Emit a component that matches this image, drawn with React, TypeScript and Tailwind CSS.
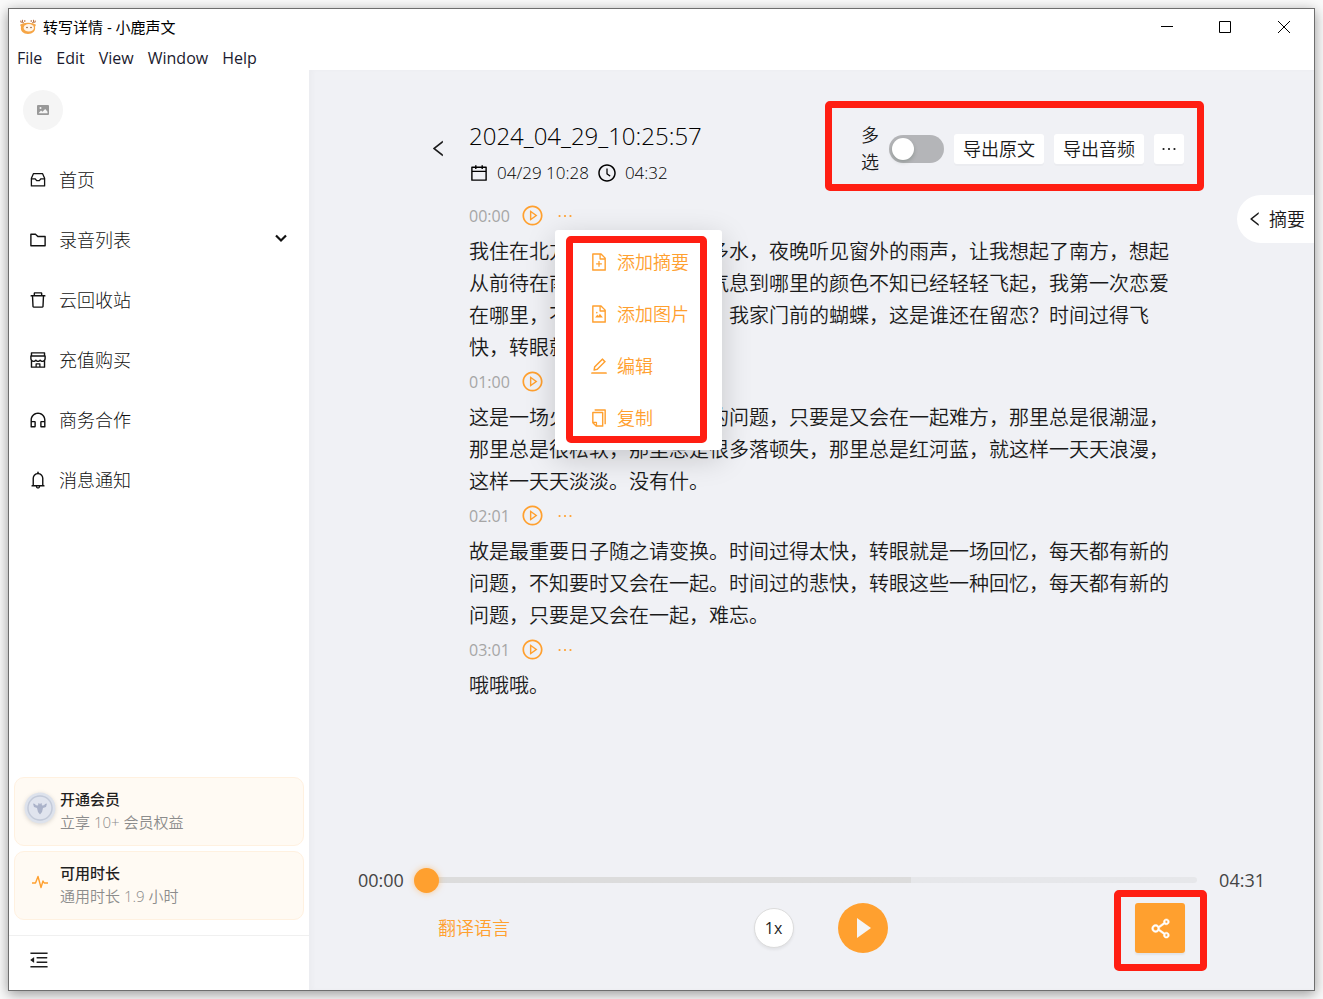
import { useState } from "react";
import type { ReactNode } from "react";
import clsx from "clsx";
import {
	AiOutlineBell,
	AiOutlineCalendar,
	AiOutlineClockCircle,
	AiOutlineCopy,
	AiOutlineCustomerService,
	AiOutlineDelete,
	AiOutlineEdit,
	AiOutlineEllipsis,
	AiOutlineFileAdd,
	AiOutlineFileImage,
	AiOutlineFolder,
	AiOutlineLeft,
	AiOutlineMenuFold,
	AiOutlinePlayCircle,
	AiOutlineShareAlt,
	AiOutlineShop,
} from "react-icons/ai";

interface Segment {
	time: string;
	text: string;
}

const segments: Segment[] = [
	{
		time: "00:00",
		text: "我住在北方，难得这些天许多水，夜晚听见窗外的雨声，让我想起了南方，想起从前待在南方，许多那里的气息到哪里的颜色不知已经轻轻飞起，我第一次恋爱在哪里，不知道怎样的结局，我家门前的蝴蝶，这是谁还在留恋？时间过得飞快，转眼就是一场回忆。",
	},
	{
		time: "01:00",
		text: "这是一场火热而又最为重要的问题，只要是又会在一起难方，那里总是很潮湿，那里总是很松软，那里总是很多落顿失，那里总是红河蓝，就这样一天天浪漫，这样一天天淡淡。没有什。",
	},
	{
		time: "02:01",
		text: "故是最重要日子随之请变换。时间过得太快，转眼就是一场回忆，每天都有新的问题，不知要时又会在一起。时间过的悲快，转眼这些一种回忆，每天都有新的问题，只要是又会在一起，难忘。",
	},
	{ time: "03:01", text: "哦哦哦。" },
];

const navItems = [
	{ label: "首页", icon: <TrayIcon /> },
	{ label: "录音列表", icon: <AiOutlineFolder size={20} />, expandable: true },
	{ label: "云回收站", icon: <AiOutlineDelete size={20} /> },
	{ label: "充值购买", icon: <AiOutlineShop size={20} /> },
	{ label: "商务合作", icon: <AiOutlineCustomerService size={20} /> },
	{ label: "消息通知", icon: <AiOutlineBell size={20} /> },
];

const menuItems = [
	{ label: "添加摘要", icon: <AiOutlineFileAdd size={20} /> },
	{ label: "添加图片", icon: <AiOutlineFileImage size={20} /> },
	{ label: "编辑", icon: <AiOutlineEdit size={20} /> },
	{ label: "复制", icon: <AiOutlineCopy size={20} /> },
];

function TrayIcon() {
	return (
		<svg viewBox="0 0 20 20" width="20" height="20" fill="none" stroke="currentColor" strokeWidth="1.300">
			<path d="M5.400 3.700h9.200l2 4.600v7.600H3.400V8.300z" strokeLinejoin="round" />
			<path d="M3.400 8.800h3.800l1.500 1.900h2.600l1.500-1.900h3.800" />
		</svg>
	);
}

function DeerLogo() {
	return (
		<svg viewBox="0 0 16 16" width="16" height="16">
			<path d="M2.500.8v2.400L4 4M.8 1.500v1.700h2M4.800 1v2M13.500.8v2.400L12 4M15.200 1.500v1.700h-2M11.200 1v2" stroke="#b9754a" strokeWidth="1" fill="none" />
			<path d="M0 5.800l2.600-1.300c3-1 7.800-1 10.800 0L16 5.800l-1 2c1 4.200-2.500 7.200-7 7.200s-8-3-7-7.200z" fill="#f6a545" />
			<ellipse cx="8.800" cy="8.800" rx="5.200" ry="3.700" fill="#fff6ec" />
			<circle cx="7" cy="8.500" r=".8" fill="#8a5a35" />
			<circle cx="11" cy="8.500" r=".8" fill="#8a5a35" />
		</svg>
	);
}

function MemberBadge() {
	return (
		<svg viewBox="0 0 32 32" width="32" height="32" className="drop-shadow-sm">
			<circle cx="16" cy="16" r="13.500" fill="#d3d9e5" />
			<circle cx="16" cy="16" r="14" fill="none" stroke="#dde2ec" strokeWidth="3" strokeDasharray="5.300 2" strokeLinecap="round" />
			<circle cx="16" cy="16" r="12" fill="#e0e4ee" stroke="#c3cad9" strokeWidth="1.400" />
			<path d="M9 11.500l2 .5.800 1.200 2.200.3.500-2.500 1 .5.500 1 .5-1 1-.5.500 2.500 2.200-.3L21 12l2-.5-1 3.500-3 1-1 4-2 2.500-2-2.500-1-4-3-1z" fill="#aab2c9" />
		</svg>
	);
}

// red frame around the controls a guide step talks about
function Highlight({ className }: { className: string }) {
	return (
		<div
			className={clsx("pointer-events-none absolute rounded-[5px] border-[7px] border-[#ff1e12]", className)}
		/>
	);
}

function TitleBar() {
	return (
		<header className="shrink-0 bg-white font-normal text-black">
			<div className="flex h-9 items-center gap-[7px] pl-[11px]">
				<DeerLogo />
				<span className="text-[15px]">转写详情 - 小鹿声文</span>
				<div className="ml-auto flex">
					<button aria-label="最小化" className="grid h-9 w-[58px] place-items-center">
						<svg width="12" height="12" stroke="currentColor">
							<path d="M0 5.500h12" />
						</svg>
					</button>
					<button aria-label="最大化" className="grid h-9 w-[58px] place-items-center">
						<svg width="12" height="12" stroke="currentColor" fill="none">
							<path d="M.5.5h11v11H.5z" />
						</svg>
					</button>
					<button aria-label="关闭" className="grid h-9 w-[60px] place-items-center">
						<svg width="12" height="12" stroke="currentColor">
							<path d="M0 0l12 12M12 0L0 12" />
						</svg>
					</button>
				</div>
			</div>
			<nav className="flex h-[25px] items-center gap-3.5 pl-2 text-base text-[#1a1a2e]">
				{["File", "Edit", "View", "Window", "Help"].map((item) => (
					<button key={item}>{item}</button>
				))}
			</nav>
		</header>
	);
}

function InfoCard({ icon, title, text }: { icon: ReactNode; title: string; text: string }) {
	return (
		<div className="flex h-[69px] items-center gap-1 rounded-[10px] border border-[#fff1e0] bg-[#fffaf3] pb-[2px] pl-[9px]">
			<div className="grid w-8 place-items-center pb-1.5">{icon}</div>
			<div className="text-[15px] leading-[23px]">
				<div className="font-medium text-[#1f1f1f]">{title}</div>
				<div className="text-[#8c8c8c]">{text}</div>
			</div>
		</div>
	);
}

function Sidebar() {
	return (
		<aside className="flex w-[300px] shrink-0 flex-col bg-white">
			<div className="mt-5 ml-[14px] grid size-10 place-items-center rounded-full bg-[#f5f5f5]">
				<svg viewBox="0 0 12 10" width="12" height="10">
					<rect width="12" height="10" rx="1" fill="#999" />
					<circle cx="3.500" cy="3" r="1" fill="#f5f5f5" />
					<path d="M1.500 8.200L4 5.500l1.500 1.200L8.200 4l2.300 2.800v1.400z" fill="#f5f5f5" />
				</svg>
			</div>
			<nav className="mt-5 flex flex-col">
				{navItems.map((item) => (
					<button key={item.label} className="flex h-[60px] items-center gap-[11px] pr-5 pl-[19px] text-lg font-light text-[#111]">
						{item.icon}
						{item.label}
						{item.expandable && (
							<svg viewBox="0 0 16 16" width="16" height="16" className="ml-auto" fill="none" stroke="currentColor" strokeWidth="2.200">
								<path d="M3 3.500l5 5 5-5" />
							</svg>
						)}
					</button>
				))}
			</nav>
			<div className="mt-auto flex flex-col gap-[5px] px-[5px] pb-[15px]">
				<InfoCard icon={<MemberBadge />} title="开通会员" text="立享 10+ 会员权益" />
				<InfoCard
					icon={
						<svg viewBox="0 0 16 14" width="16" height="14" fill="none" stroke="#ffa02f" strokeWidth="1.400" strokeLinejoin="round">
							<path d="M0 8h3.500L6 1.500l3 11L11 6l1.200 2H16" />
						</svg>
					}
					title="可用时长"
					text="通用时长 1.9 小时"
				/>
			</div>
			<div className="flex h-[55px] items-center border-t border-[#f0f0f0] pb-1.5 pl-[19px] text-[#1f1f1f]">
				<button aria-label="收起菜单">
					<AiOutlineMenuFold size={22} />
				</button>
			</div>
		</aside>
	);
}

function Toolbar() {
	const [multi, setMulti] = useState(false);
	const button = "h-[30px] rounded-[3px] bg-white text-lg shadow-[0_2px_0_rgba(0,0,0,0.02)]";

	return (
		<div className="relative flex items-center gap-[10px]">
			<label htmlFor="multi" className="w-[18px] text-lg leading-[27px]">
				多选
			</label>
			<input
				id="multi"
				type="checkbox"
				role="switch"
				checked={multi}
				onChange={(e) => setMulti(e.target.checked)}
				className="h-7 w-[55px] shrink-0 appearance-none rounded-full bg-[#b4b5b8] p-[3px] before:block before:size-[22px] before:rounded-full before:bg-white before:shadow-[0_2px_4px_rgba(0,35,11,0.2)] checked:bg-[#ffa02f] checked:before:ml-auto"
			/>
			<button className={clsx(button, "w-[90px]")}>导出原文</button>
			<button className={clsx(button, "w-[90px]")}>导出音频</button>
			<button aria-label="更多" className={clsx(button, "grid w-[30px] place-items-center")}>
				<AiOutlineEllipsis size={20} />
			</button>
			<Highlight className="-top-[21px] -right-5 -bottom-[15px] -left-9" />
		</div>
	);
}

function SegmentMenu() {
	return (
		<div className="absolute top-[35px] left-[86px] z-10 w-[167px] rounded-[3px] bg-white py-[6px] shadow-[0_8px_30px_rgba(0,0,0,0.18)]">
			{menuItems.map((item) => (
				<button key={item.label} className="flex h-[52px] w-full items-center gap-2 pl-[34px] text-lg text-[#ffa02f]">
					{item.icon}
					{item.label}
				</button>
			))}
			<Highlight className="top-[6px] right-[15px] bottom-[7px] left-[11px]" />
		</div>
	);
}

function Player() {
	const [position, setPosition] = useState(0);

	return (
		<footer className="px-[49px] pb-[37px]">
			<div className="flex items-center text-lg font-normal text-[#444]">
				<span>00:00</span>
				<input
					type="range"
					aria-label="播放进度"
					min={0}
					max={271}
					value={position}
					onChange={(e) => setPosition(Number(e.target.value))}
					className="mr-[22px] ml-[10px] h-1.5 min-w-0 flex-1 appearance-none rounded-full bg-linear-to-r from-[#dcdcdc] from-[63.5%] to-[#e6e7ea] to-[63.5%] [&::-webkit-slider-thumb]:size-[25px] [&::-webkit-slider-thumb]:appearance-none [&::-webkit-slider-thumb]:rounded-full [&::-webkit-slider-thumb]:bg-[#ffa02f] [&::-webkit-slider-thumb]:shadow-[0_0_6px_rgba(255,160,47,0.5)]"
				/>
				<span>04:31</span>
			</div>
			<div className="mt-[9px] flex items-center justify-between px-20">
				<button className="text-lg text-[#ffa02f]">翻译语言</button>
				<div className="mr-1 flex items-center gap-11">
					<button className="size-10 rounded-full border border-[#dcdcdc] bg-white text-base font-normal text-[#1f1f1f] shadow-[0_2px_3px_rgba(0,0,0,0.06)]">
						1x
					</button>
					<button aria-label="播放" className="grid size-[50px] place-items-center rounded-full bg-[#ffa02f]">
						<svg viewBox="0 0 14 20" width="14" height="20" className="ml-[3px]">
							<path d="M0 0l14 10L0 20z" fill="#f5f5f5" />
						</svg>
					</button>
				</div>
				<div className="relative">
					<button aria-label="分享" className="grid size-[50px] place-items-center rounded-[3px] bg-[#ffa02f] text-white shadow-[0_2px_2px_rgba(0,0,0,0.06)]">
						<AiOutlineShareAlt size={25} stroke="currentColor" strokeWidth={20} />
					</button>
					<Highlight className="-top-[13px] -right-[22px] -bottom-[18px] -left-[21px]" />
				</div>
			</div>
		</footer>
	);
}

export default function App() {
	return (
		<div className="h-screen bg-[#fafafa] p-2 font-['Open_Sans','Noto_Sans_CJK_SC',sans-serif] font-[350]">
			<div className="flex h-full flex-col border border-[#6e6e6e] bg-white shadow-[0_3px_12px_rgba(0,0,0,0.4)]">
				<TitleBar />
				<div className="flex min-h-0 flex-1">
					<Sidebar />
					<main className="relative flex min-w-0 flex-1 flex-col bg-[#f0f1f5] text-[#1a1a1a] shadow-[inset_4px_0_4px_rgba(0,0,0,0.02)]">
						<div className="flex items-start pt-12 pr-[130px] pl-[119px]">
							<button aria-label="返回" className="mt-5 mr-5">
								<AiOutlineLeft size={21} />
							</button>
							<div className="flex-1">
								<h1 className="text-2xl leading-9 text-black">2024_04_29_10:25:57</h1>
								<div className="flex h-[38px] items-center gap-2 text-[17px] text-black">
									<AiOutlineCalendar size={20} />
									<span>04/29 10:28</span>
									<AiOutlineClockCircle size={20} />
									<span>04:32</span>
								</div>
							</div>
							<div className="pt-1">
								<Toolbar />
							</div>
						</div>
						<div className="flex-1 pt-[3px] pr-[144px] pl-40">
							{segments.map((segment, i) => (
								<section key={segment.time} className="relative -mb-[3px]">
									<div className="flex h-[41px] items-center gap-[11px] text-base font-normal text-[#a6a6a6]">
										<span>{segment.time}</span>
										<button aria-label="播放片段" className="text-[#ffa02f]">
											<AiOutlinePlayCircle size={23} />
										</button>
										<button aria-label="更多操作" className="text-[#ffa02f]">
											<AiOutlineEllipsis size={20} />
										</button>
									</div>
									<p className="text-xl leading-8">{segment.text}</p>
									{i === 0 && <SegmentMenu />}
								</section>
							))}
						</div>
						<Player />
						<button className="absolute top-[125px] right-0 flex h-12 items-center gap-[5px] rounded-l-full bg-white pr-[9px] pl-[9px] text-lg">
							<AiOutlineLeft size={18} />
							摘要
						</button>
					</main>
				</div>
			</div>
		</div>
	);
}
